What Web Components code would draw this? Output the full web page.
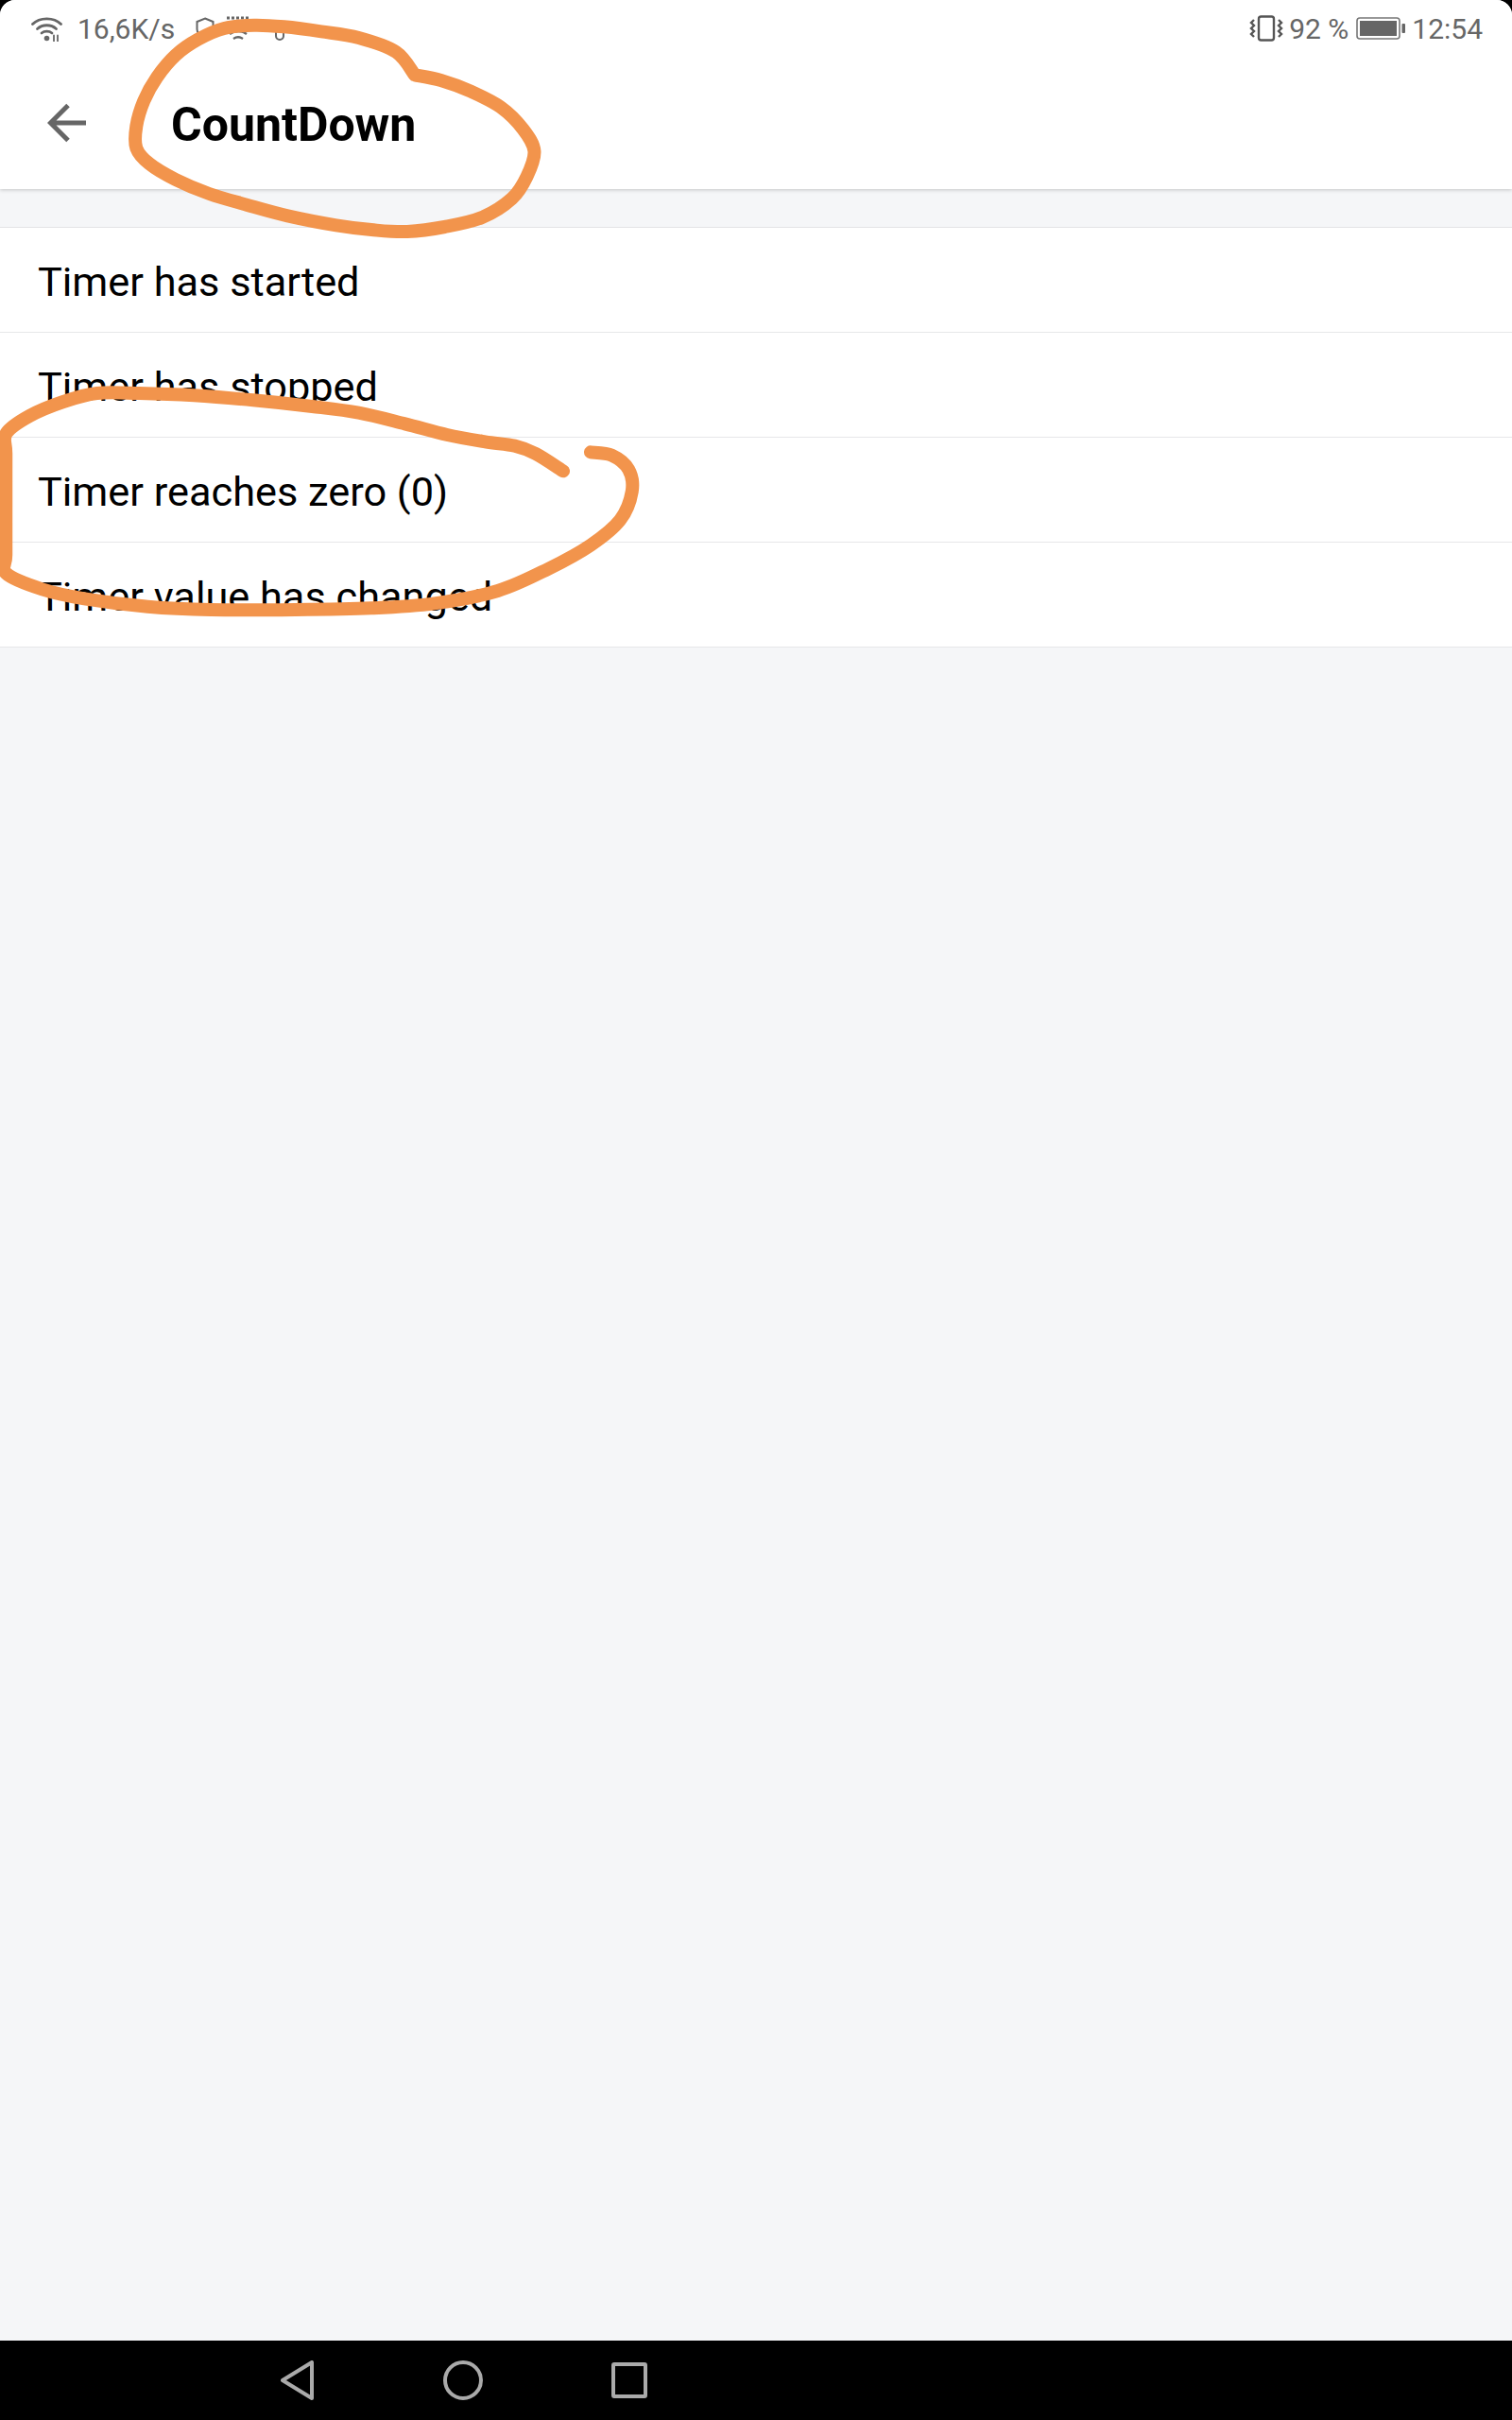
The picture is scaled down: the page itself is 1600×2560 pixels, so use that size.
<!DOCTYPE html>
<html>
<head>
<meta charset="utf-8">
<title>CountDown</title>
<style>
  html, body { margin: 0; padding: 0; background: #000; }
  body { font-family: Roboto, "Noto Sans", sans-serif; }
</style>
</head>
<body>
<phone-screen>
  <status-bar slot="top"></status-bar>
  <app-bar slot="top">CountDown</app-bar>
  <timer-list>
    <timer-row>Timer has started</timer-row>
    <timer-row>Timer has stopped</timer-row>
    <timer-row>Timer reaches zero (0)</timer-row>
    <timer-row>Timer value has changed</timer-row>
  </timer-list>
  <nav-bar slot="bottom"></nav-bar>
  <ink-marks slot="over"></ink-marks>
</phone-screen>

<script>
class PhoneScreen extends HTMLElement {
  constructor() {
    super();
    this.attachShadow({ mode: "open" }).innerHTML = `
      <style>
        :host { display: block; position: relative; width: 1600px; height: 2560px; overflow: hidden; background: #000; }
        #frame { display: flex; flex-direction: column; height: 100%; }
        #display { flex: 1; display: flex; flex-direction: column; background: #f5f6f8; border-radius: 16px 16px 0 0; overflow: hidden; }
        #content { flex: 1; padding-top: 40px; }
      </style>
      <div id="frame">
        <div id="display">
          <slot name="top"></slot>
          <div id="content"><slot></slot></div>
        </div>
        <slot name="bottom"></slot>
      </div>
      <slot name="over"></slot>
    `;
  }
}

class StatusBar extends HTMLElement {
  constructor() {
    super();
    this.attachShadow({ mode: "open" }).innerHTML = `
      <style>
        :host { display: flex; align-items: center; justify-content: space-between; position: relative; z-index: 1; height: 60px; padding: 0 31px 0 33px; background: #fff; color: #666; font-size: 30px; line-height: 60px; }
        .side { display: flex; align-items: center; }
        .side span { position: relative; top: 1px; }
        svg { display: block; flex: none; }
        #speed { margin-left: 16px; }
        #shield { margin-left: 22px; }
        #mini { margin-left: 12px; }
        #dot { margin-left: 26px; }
        #level { margin-left: 6px; }
        #battery { margin-left: 8px; }
        #clock { margin-left: 6px; }
      </style>
      <div class="side">
        <svg width="33" height="27" viewBox="0 0 33 27" fill="none" stroke="#666" stroke-width="2.8" stroke-linecap="round">
          <path d="M1.5 8.5C9 1 24 1 31.5 8.5"/>
          <path d="M6.5 13.5C12 8.5 21 8.5 26.5 13.5"/>
          <path d="M11 18C14 15.6 19 15.6 22 18"/>
          <circle cx="16.5" cy="23.5" r="2.8" fill="#666" stroke="none"/>
          <path d="M24 20.5v6M28 20.5v6" stroke-width="1.8"/>
        </svg>
        <span id="speed">16,6K/s</span>
        <svg id="shield" width="20" height="24" viewBox="0 0 20 24" fill="none" stroke="#666" stroke-width="2"><path d="M10 1.5L18.5 5v8c0 4-4 7.5-8.5 9.5C5.5 20.5 1.5 17 1.5 13V5z"/></svg>
        <svg id="mini" width="26" height="28" viewBox="0 0 26 28" fill="none" stroke="#666">
          <path d="M1 3h24" stroke-width="3" stroke-dasharray="3 2"/>
          <path d="M4 20c5-4 13-4 18 0M8 25c3-2 7-2 10 0" stroke-width="2.4"/>
        </svg>
        <svg id="dot" width="10" height="10" viewBox="0 0 10 10" fill="none" stroke="#666" stroke-width="2" style="margin-top:16px"><path d="M1 0v5a4 4 0 0 0 8 0V0"/></svg>
      </div>
      <div class="side">
        <svg width="36" height="28" viewBox="0 0 36 28" fill="none" stroke="#555">
          <rect x="10" y="1.5" width="16" height="25" rx="2.5" stroke-width="2.4"/>
          <path d="M5 5L2 8l3 3-3 3 3 3-3 3 3 3M31 5l3 3-3 3 3 3-3 3 3 3-3 3" stroke-width="2.4"/>
        </svg>
        <span id="level">92 %</span>
        <svg id="battery" width="53" height="24" viewBox="0 0 53 24">
          <rect x="1" y="1" width="45" height="22" rx="3" fill="none" stroke="#777" stroke-width="1.6"/>
          <rect x="4" y="4" width="39" height="16" fill="#666"/>
          <rect x="48.5" y="7" width="3.5" height="10" rx="1" fill="#666"/>
        </svg>
        <span id="clock">12:54</span>
      </div>
    `;
  }
}

class AppBar extends HTMLElement {
  constructor() {
    super();
    this.attachShadow({ mode: "open" }).innerHTML = `
      <style>
        :host { display: flex; align-items: center; height: 140px; padding-left: 50px; background: #fff; box-shadow: 0 1px 4px rgba(0,0,0,.2); position: relative; }
        svg { display: block; flex: none; margin-top: -1px; }
        #title { margin-left: 90px; font-size: 50px; font-weight: 700; color: #000; position: relative; top: 2px; }
      </style>
      <svg width="41" height="42" viewBox="0 0 41 42" fill="none" stroke="#666" stroke-width="5">
        <path d="M22 2.5L3.5 21 22 39.5M3.5 21H41"/>
      </svg>
      <div id="title"><slot></slot></div>
    `;
  }
}

class TimerList extends HTMLElement {
  constructor() {
    super();
    this.attachShadow({ mode: "open" }).innerHTML = `
      <style>
        :host { display: block; background: #fff; border-top: 1px solid #e3e4e6; }
      </style>
      <slot></slot>
    `;
  }
}

class TimerRow extends HTMLElement {
  constructor() {
    super();
    this.attachShadow({ mode: "open" }).innerHTML = `
      <style>
        :host { display: flex; align-items: center; height: 110px; padding-left: 40px; border-bottom: 1px solid #e6e7e9; font-size: 43.3px; color: #000; }
        span { position: relative; top: 2px; }
      </style>
      <span><slot></slot></span>
    `;
  }
}

class NavBar extends HTMLElement {
  constructor() {
    super();
    this.attachShadow({ mode: "open" }).innerHTML = `
      <style>
        :host { display: flex; align-items: center; gap: 136px; height: 84px; padding-left: 297px; background: #000; }
        svg { display: block; flex: none; }
      </style>
      <svg width="36" height="42" viewBox="0 0 36 42" fill="none" stroke="#aaa" stroke-width="4" stroke-linejoin="round"><path d="M2 21L33 2v38z"/></svg>
      <svg width="42" height="42" viewBox="0 0 42 42" fill="none" stroke="#aaa" stroke-width="4"><circle cx="21" cy="21" r="19"/></svg>
      <svg width="38" height="38" viewBox="0 0 38 38" fill="none" stroke="#aaa" stroke-width="4" stroke-linejoin="round"><rect x="2" y="2" width="34" height="34" rx="1"/></svg>
    `;
  }
}

// hand drawn circles on top of the screenshot, points read off the crops
const inkTitle = [[1110,238],[1060,165],[960,120],[860,100],[760,85],[680,80],[600,90],[530,125],[470,175],[420,245],[385,320],[365,400],[365,470],[400,520],[470,570],[560,615],[660,650],[770,685],[900,715],[1000,730],[1090,735],[1190,720],[1290,690],[1370,630],[1410,560],[1430,480],[1400,410],[1340,340],[1260,290],[1180,255],[1110,238]]
  .map(([x, y]) => [x / 2.529, y / 3]);
const inkZero = [[1335,355],[1270,300],[1220,275],[1150,262],[1060,240],[960,205],[850,170],[740,150],[600,130],[460,115],[330,108],[230,108],[150,135],[70,180],[15,235],[14,300],[14,450],[14,620],[15,680],[100,730],[200,760],[350,785],[500,795],[700,795],[880,790],[1030,775],[1180,735],[1300,665],[1400,590],[1470,510],[1498,420],[1490,350],[1450,305],[1400,295]]
  .map(([x, y]) => [x / 2.24, y / 3 + 380]);

// catmull-rom through the points so the stroke doesn't look polygonal
function toPath(pts) {
  let d = `M${pts[0][0]} ${pts[0][1]}`;
  for (let i = 0; i < pts.length - 1; i++) {
    const p0 = pts[i - 1] || pts[i], p1 = pts[i], p2 = pts[i + 1], p3 = pts[i + 2] || p2;
    const c1 = [p1[0] + (p2[0] - p0[0]) / 6, p1[1] + (p2[1] - p0[1]) / 6];
    const c2 = [p2[0] - (p3[0] - p1[0]) / 6, p2[1] - (p3[1] - p1[1]) / 6];
    d += `C${c1[0]} ${c1[1]} ${c2[0]} ${c2[1]} ${p2[0]} ${p2[1]}`;
  }
  return d;
}

class InkMarks extends HTMLElement {
  constructor() {
    super();
    this.attachShadow({ mode: "open" }).innerHTML = `
      <style>
        :host { display: block; position: absolute; inset: 0; z-index: 2; pointer-events: none; }
        svg { display: block; }
        path { fill: none; stroke: #f2944c; stroke-width: 14; stroke-linecap: round; stroke-linejoin: round; }
      </style>
      <svg width="1600" height="2560" viewBox="0 0 1600 2560">
        <path d="${toPath(inkTitle)}"/>
        <path d="${toPath(inkZero)}"/>
      </svg>
    `;
  }
}

customElements.define("phone-screen", PhoneScreen);
customElements.define("status-bar", StatusBar);
customElements.define("app-bar", AppBar);
customElements.define("timer-list", TimerList);
customElements.define("timer-row", TimerRow);
customElements.define("nav-bar", NavBar);
customElements.define("ink-marks", InkMarks);
</script>
</body>
</html>
